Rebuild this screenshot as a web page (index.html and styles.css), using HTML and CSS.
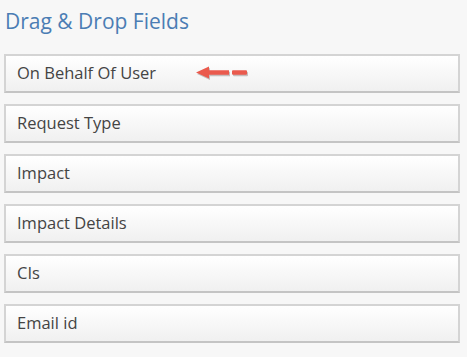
FILE: index.html
```html
<!DOCTYPE html>
<html lang="en">
<head>
  <meta charset="UTF-8">
  <title>Drag & Drop Fields</title>
  <link rel="stylesheet" href="styles.css">
</head>
<body>
  <div class="panel">
    <h3 class="title">Drag &amp; Drop Fields</h3>
    <div class="fields">
      <div class="field">
        <span>On Behalf Of User</span>
        <svg class="arrow" width="54" height="15" viewBox="0 0 54 15">
          <g fill="#8a7a78" opacity="0.45" transform="translate(1,1.5)">
            <path d="M0 6.5 L13 0.5 L13 4.3 L33 4.3 L33 8.7 L13 8.7 L13 12.5 Z"/>
            <rect x="36" y="4.3" width="15" height="4.4" rx="1"/>
          </g>
          <g fill="#ea5a4d">
            <path d="M0 6.5 L13 0.5 L13 4.3 L33 4.3 L33 8.7 L13 8.7 L13 12.5 Z"/>
            <rect x="36" y="4.3" width="15" height="4.4" rx="1"/>
          </g>
        </svg>
      </div>
      <div class="field"><span>Request Type</span></div>
      <div class="field"><span>Impact</span></div>
      <div class="field"><span>Impact Details</span></div>
      <div class="field"><span>CIs</span></div>
      <div class="field"><span>Email id</span></div>
    </div>
  </div>
</body>
</html>
```

FILE: styles.css
```css
body {
  margin: 0;
  background-color: #f7f7f7;
  font-family: 'Open Sans', sans-serif;
}

.panel {
  padding: 8px 7px 0 4px;
}

.title {
  margin: 0 0 0 1px;
  font-size: 21px;
  font-weight: normal;
  color: #4b7db4;
  line-height: 26px;
}

.fields {
  display: flex;
  flex-direction: column;
  gap: 11px;
  margin-top: 20px;
}

.field {
  display: flex;
  align-items: center;
  box-sizing: content-box;
  height: 33px;
  padding: 0 11px 2px;
  border: 2px solid #d4d4d4;
  border-bottom-color: #c4c4c4;
  background: linear-gradient(#ffffff, #f0f0f0);
  color: #444;
  font-size: 16.5px;
}

.arrow {
  margin-left: 40px;
  margin-top: 2px;
}
```
